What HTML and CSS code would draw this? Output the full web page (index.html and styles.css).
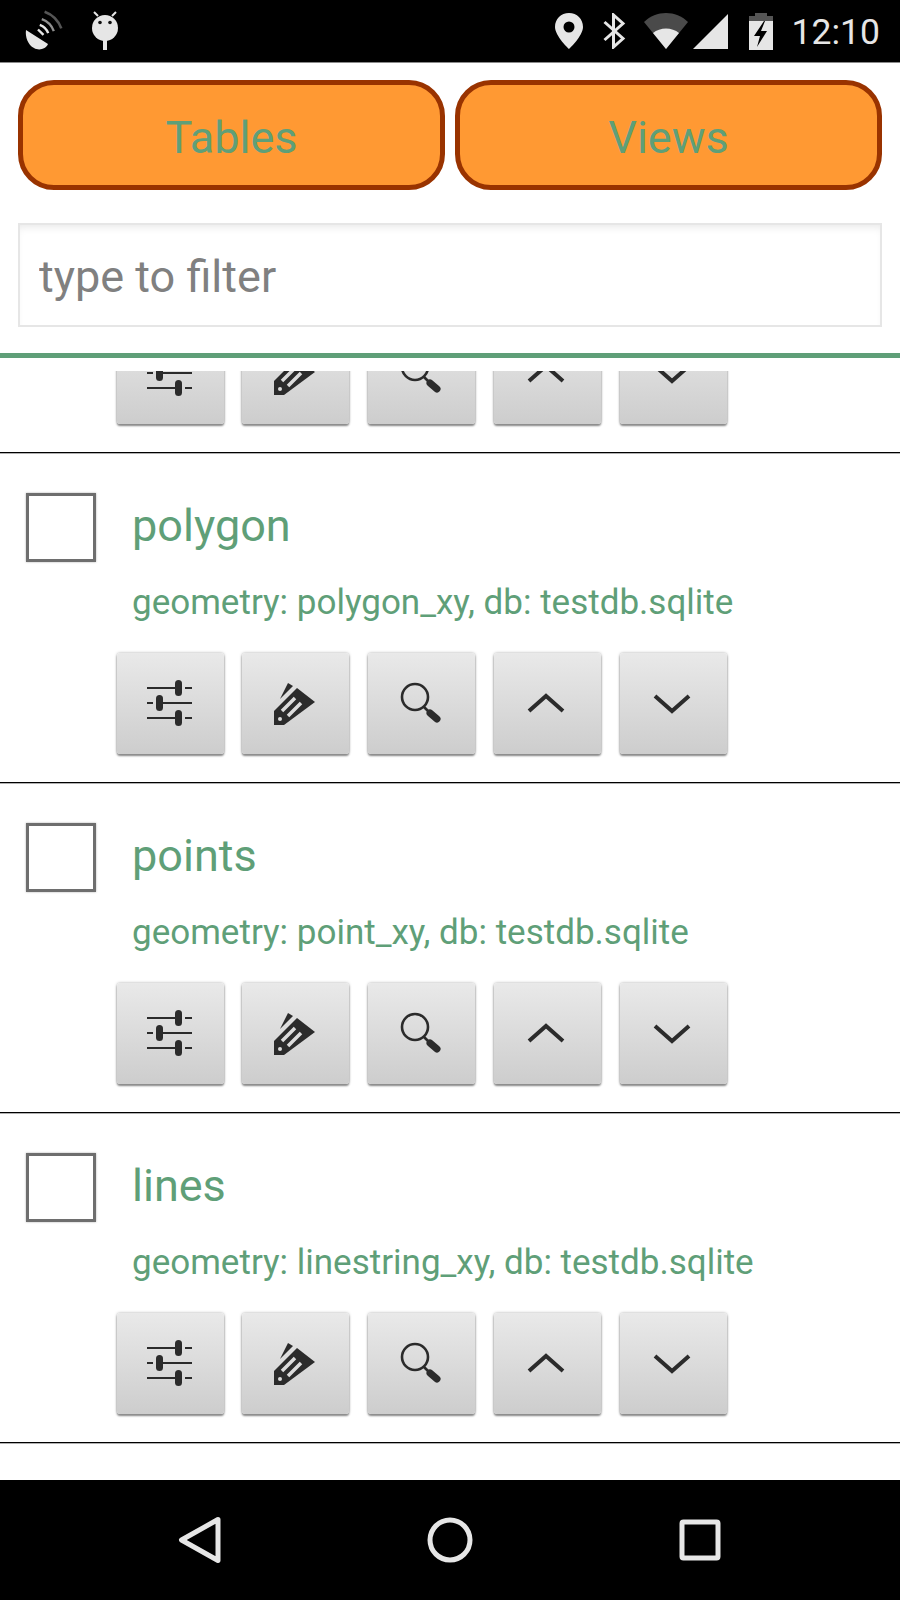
FILE: index.html
```html
<!DOCTYPE html>
<html lang="en">
<head>
    <meta charset="UTF-8">
    <meta name="viewport" content="width=device-width, initial-scale=1.0">
    <title>Tables</title>
    <link rel="stylesheet" href="styles.css">
</head>
<body>
    <svg class="icon-defs" width="0" height="0" aria-hidden="true">
        <symbol id="i-sliders" viewBox="0 0 48 48">
            <path d="M1 8h31M39 8h7M1 23h6M15 23h31M1 38h31M39 38h7" fill="none" stroke="#2b2b2b" stroke-width="2"/>
            <rect x="29" y="0" width="7" height="16" rx="3.5" fill="#2b2b2b"/>
            <rect x="10" y="15" width="7" height="16" rx="3.5" fill="#2b2b2b"/>
            <rect x="29" y="30" width="7" height="16" rx="3.5" fill="#2b2b2b"/>
        </symbol>
        <symbol id="i-tag" viewBox="0 0 48 48">
            <path d="M2 45V31L25 8l18 14-31 23z" fill="#2b2b2b"/>
            <path d="M8 19L16 3l5 3z" fill="#2b2b2b"/>
            <path d="M10 31L23 18M16 36L29 23" stroke="#dcdcdc" stroke-width="3.5" fill="none"/>
            <circle cx="8" cy="39" r="2" fill="#dcdcdc"/>
        </symbol>
        <symbol id="i-search" viewBox="0 0 48 48">
            <circle cx="17" cy="17" r="13" fill="none" stroke="#2b2b2b" stroke-width="2.6"/>
            <path d="M26 27L31 32" stroke="#2b2b2b" stroke-width="2.6"/>
            <path d="M32 33L39 39" stroke="#2b2b2b" stroke-width="7" stroke-linecap="round"/>
        </symbol>
        <symbol id="i-up" viewBox="0 0 48 48">
            <path d="M6 31L23 16L40 31" fill="none" stroke="#2b2b2b" stroke-width="4"/>
        </symbol>
        <symbol id="i-down" viewBox="0 0 48 48">
            <path d="M6 16L23 31L40 16" fill="none" stroke="#2b2b2b" stroke-width="4"/>
        </symbol>
    </svg>

    <div class="status-bar">
        <div class="status-left">
            <svg class="ic-dish" width="40" height="42" viewBox="0 0 40 42">
                <path d="M1 20L23 34C21 39 14 41 9 38C3 35 0 27 1 20z" fill="#e6e6e6"/>
                <path d="M13 19.500L18.500 24.900M14.800 14.800A14 14 0 0 1 23.200 23.200" fill="none" stroke="#e6e6e6" stroke-width="2.4"/>
                <path d="M16.800 9.200A20 20 0 0 1 28.800 21.200" fill="none" stroke="#8f8f8f" stroke-width="2.4"/>
                <path d="M19.600 1.700A28 28 0 0 1 36.300 18.400" fill="none" stroke="#555" stroke-width="2.600"/>
            </svg>
            <svg class="ic-bot" width="28" height="40" viewBox="0 0 28 40">
                <path d="M3 1l4 4M25 1l-4 4" stroke="#e6e6e6" stroke-width="2"/>
                <circle cx="14" cy="17" r="13" fill="#e6e6e6"/>
                <circle cx="9" cy="11.5" r="1.8" fill="#111"/>
                <circle cx="19" cy="11.5" r="1.8" fill="#111"/>
                <rect x="12" y="29" width="4" height="10" fill="#e6e6e6"/>
            </svg>
        </div>
        <div class="status-right">
            <svg width="28" height="36" viewBox="0 0 28 36">
                <path fill-rule="evenodd" d="M14 0C6 0 0 6 0 14c0 9 14 22 14 22s14-13 14-22C28 6 22 0 14 0zm0 8.500a5.500 5.500 0 1 1 0 11 5.500 5.500 0 0 1 0-11z" fill="#e6e6e6"/>
            </svg>
            <svg class="ic-bt" width="23" height="36" viewBox="0 0 23 36">
                <path d="M1.500 9L20 25.500 10.500 34V2L20 10.500 1.500 27" fill="none" stroke="#e6e6e6" stroke-width="3"/>
            </svg>
            <svg class="ic-wifi" width="44" height="36" viewBox="0 0 44 36">
                <path d="M0 9C12-3 32-3 44 9L22 36z" fill="#4a4a4a"/>
                <path d="M9 20c7-6 19-6 26 0L22 36z" fill="#e6e6e6"/>
            </svg>
            <svg class="ic-signal" width="35" height="35" viewBox="0 0 35 35">
                <path d="M0 35L35 0v35z" fill="#e6e6e6"/>
            </svg>
            <svg class="ic-batt" width="24" height="37" viewBox="0 0 24 37">
                <path d="M6 0h12v3h6v8H0V3h6z" fill="#555"/>
                <path d="M0 8h24v29H0z" fill="#e6e6e6"/>
                <path d="M15 8L5 23h6l-3 11 10-16h-6l4-10z" fill="#000"/>
            </svg>
            <span class="clock">12:10</span>
        </div>
    </div>

    <div class="header">
        <div class="tabs">
            <button class="tab">Tables</button>
            <button class="tab">Views</button>
        </div>
        <input class="filter" type="text" placeholder="type to filter">
    </div>

    <div class="table-list">
        <div class="row row-scrolled">
            <div class="row-head"></div>
            <div class="actions">
                <button class="act"><svg width="48" height="48"><use href="#i-sliders"/></svg></button>
                <button class="act"><svg width="48" height="48"><use href="#i-tag"/></svg></button>
                <button class="act"><svg width="48" height="48"><use href="#i-search"/></svg></button>
                <button class="act"><svg width="48" height="48"><use href="#i-up"/></svg></button>
                <button class="act"><svg width="48" height="48"><use href="#i-down"/></svg></button>
            </div>
        </div>
        <div class="row">
            <div class="row-head">
                <span class="check"></span>
                <div class="row-text">
                    <div class="row-title">polygon</div>
                    <div class="row-sub">geometry: polygon_xy, db: testdb.sqlite</div>
                </div>
            </div>
            <div class="actions">
                <button class="act"><svg width="48" height="48"><use href="#i-sliders"/></svg></button>
                <button class="act"><svg width="48" height="48"><use href="#i-tag"/></svg></button>
                <button class="act"><svg width="48" height="48"><use href="#i-search"/></svg></button>
                <button class="act"><svg width="48" height="48"><use href="#i-up"/></svg></button>
                <button class="act"><svg width="48" height="48"><use href="#i-down"/></svg></button>
            </div>
        </div>
        <div class="row">
            <div class="row-head">
                <span class="check"></span>
                <div class="row-text">
                    <div class="row-title">points</div>
                    <div class="row-sub">geometry: point_xy, db: testdb.sqlite</div>
                </div>
            </div>
            <div class="actions">
                <button class="act"><svg width="48" height="48"><use href="#i-sliders"/></svg></button>
                <button class="act"><svg width="48" height="48"><use href="#i-tag"/></svg></button>
                <button class="act"><svg width="48" height="48"><use href="#i-search"/></svg></button>
                <button class="act"><svg width="48" height="48"><use href="#i-up"/></svg></button>
                <button class="act"><svg width="48" height="48"><use href="#i-down"/></svg></button>
            </div>
        </div>
        <div class="row">
            <div class="row-head">
                <span class="check"></span>
                <div class="row-text">
                    <div class="row-title">lines</div>
                    <div class="row-sub">geometry: linestring_xy, db: testdb.sqlite</div>
                </div>
            </div>
            <div class="actions">
                <button class="act"><svg width="48" height="48"><use href="#i-sliders"/></svg></button>
                <button class="act"><svg width="48" height="48"><use href="#i-tag"/></svg></button>
                <button class="act"><svg width="48" height="48"><use href="#i-search"/></svg></button>
                <button class="act"><svg width="48" height="48"><use href="#i-up"/></svg></button>
                <button class="act"><svg width="48" height="48"><use href="#i-down"/></svg></button>
            </div>
        </div>
    </div>

    <div class="nav-bar">
        <svg width="44" height="48" viewBox="0 0 44 48">
            <path d="M40 3.500L3.500 24 40 44.500z" fill="none" stroke="#e6e6e6" stroke-width="5" stroke-linejoin="round"/>
        </svg>
        <svg width="46" height="46" viewBox="0 0 46 46">
            <circle cx="23" cy="23" r="20" fill="none" stroke="#e6e6e6" stroke-width="5"/>
        </svg>
        <svg width="42" height="42" viewBox="0 0 42 42">
            <rect x="3" y="3" width="36" height="36" rx="1.500" fill="none" stroke="#e6e6e6" stroke-width="5"/>
        </svg>
    </div>
</body>
</html>
```

FILE: styles.css
```css
* {
    box-sizing: border-box;
}
body {
    font-family: Roboto, 'Liberation Sans', sans-serif;
    width: 900px;
    height: 1600px;
    margin: 0;
    padding: 0;
    background-color: #ffffff;
    display: flex;
    flex-direction: column;
    overflow: hidden;
}
.icon-defs {
    display: none;
}
.status-bar {
    height: 63px;
    flex-shrink: 0;
    background-color: #000000;
    border-bottom: 1px solid #8a8a8a;
    display: flex;
    justify-content: space-between;
    align-items: center;
    padding: 0 20px 0 25px;
}
.status-left, .status-right {
    display: flex;
    align-items: center;
}
.ic-bot {
    margin-left: 26px;
}
.ic-bt {
    margin-left: 20px;
}
.ic-wifi {
    margin-left: 18px;
}
.ic-signal {
    margin-left: 5px;
}
.ic-batt {
    margin-left: 21px;
}
.clock {
    margin: 2px 0 0 19px;
    font-size: 35.5px;
    color: #e6e6e6;
}
.header {
    flex-shrink: 0;
    height: 295px;
    padding: 17px 18px 0;
    border-bottom: 5px solid #5f9f78;
}
.tabs {
    display: flex;
    gap: 10px;
}
.tab {
    flex: 1;
    height: 110px;
    padding: 4px 0 0;
    border: 5px solid #993300;
    border-radius: 36px;
    background-color: #ff9933;
    color: #5f9f78;
    font-family: inherit;
    font-size: 45px;
}
.filter {
    display: block;
    width: 100%;
    height: 104px;
    margin-top: 33px;
    padding: 3px 19px 0;
    border: 2px solid #e6e6e6;
    box-shadow: inset 0 6px 8px -4px #e8e8e8;
    font-family: inherit;
    font-size: 45px;
    outline: none;
}
.filter::placeholder {
    color: #808080;
    opacity: 1;
}
.table-list {
    flex: 1;
    margin-top: 13px;
    overflow: hidden;
}
.row {
    height: 330px;
    padding: 40px 0 0 26px;
    border-bottom: 1px solid #000000;
    box-shadow: 0 1px 0 #b0b0b0;
}
.row-scrolled {
    margin-top: -248px;
}
.row-head {
    display: flex;
    height: 160px;
}
.check {
    width: 70px;
    height: 69px;
    border: 3px solid #6e6e6e;
    box-shadow: 0 0 2px #b0b0b0;
    flex-shrink: 0;
}
.row-text {
    margin-left: 36px;
    color: #5f9f78;
}
.row-title {
    font-size: 45px;
    line-height: 50px;
    margin-top: 8px;
}
.row-sub {
    font-size: 35px;
    line-height: 40px;
    margin-top: 32px;
}
.actions {
    display: flex;
    gap: 18.75px;
    margin-left: 90.5px;
}
.act {
    width: 107px;
    height: 101px;
    padding: 0;
    border: none;
    border-radius: 3px;
    background: linear-gradient(#e9e9e9, #cdcdcd);
    box-shadow: 0 2px 2px #8a8a8a, 0 0 3px #a8a8a8;
    display: flex;
    align-items: center;
    justify-content: center;
}
.nav-bar {
    height: 120px;
    flex-shrink: 0;
    background-color: #000000;
    display: grid;
    grid-template-columns: repeat(3, 250px);
    justify-content: center;
    justify-items: center;
    align-items: center;
}
```
